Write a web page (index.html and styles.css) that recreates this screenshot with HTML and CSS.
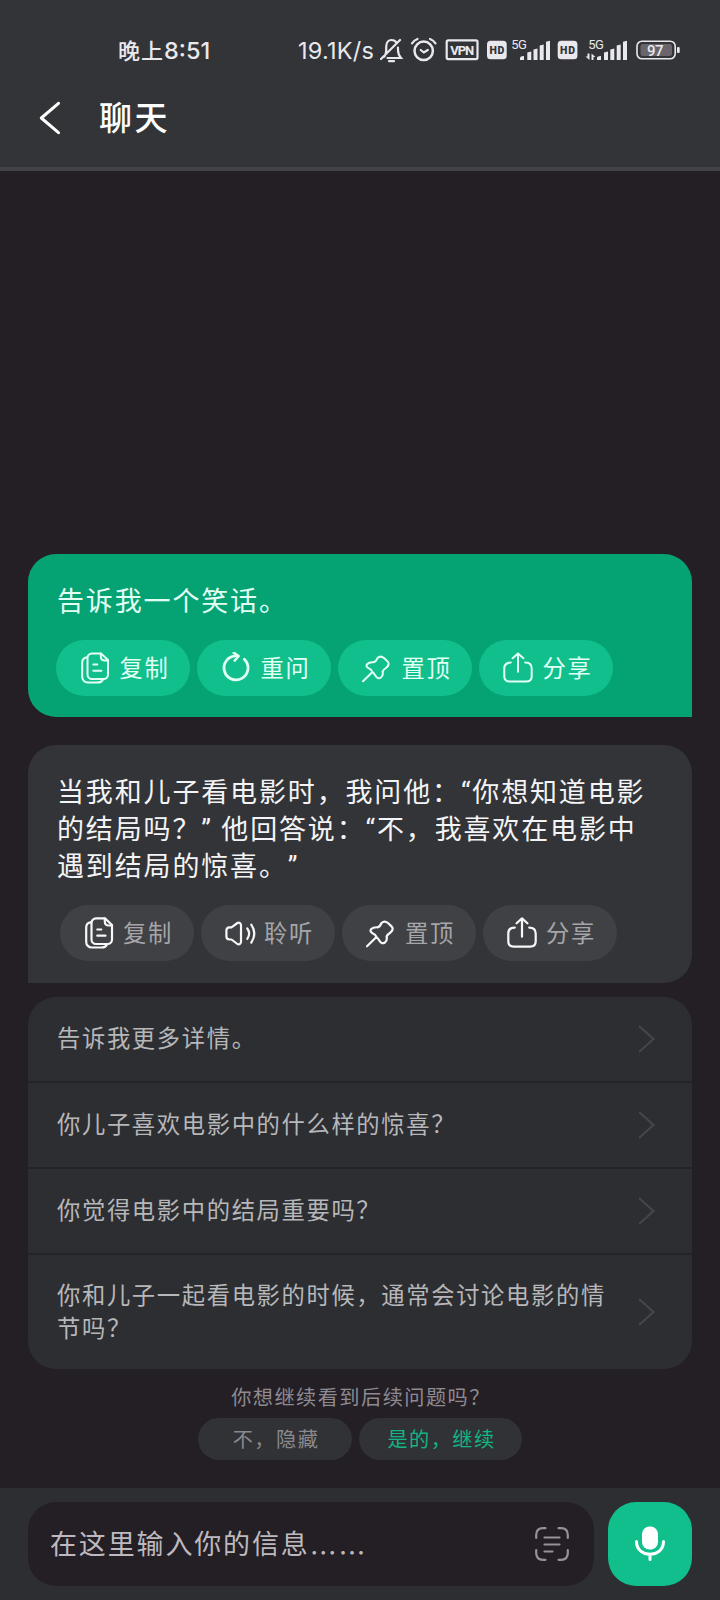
FILE: index.html
```html
<!DOCTYPE html>
<html lang="zh-CN">
<head>
<meta charset="utf-8">
<title>聊天</title>
<link rel="stylesheet" href="styles.css">
</head>
<body>
<svg class="defs" width="0" height="0">
  <symbol id="copy" viewBox="0 0 32 32">
    <path d="M12 1.4h9l7 6.6v14.500a4.500 4.500 0 0 1-4.500 4.500H12a4.500 4.500 0 0 1-4.500-4.500V5.900A4.500 4.500 0 0 1 12 1.400z"/>
    <path d="M20.800 1.600v2.900q0 4 4 4h3M7.300 5.200Q2.200 5.700 2.200 10.600V25a5.500 5.500 0 0 0 5.500 5.500h10q4 0 5.300-3M13.300 12.500h4M13.300 18.700h8.200"/>
  </symbol>
  <symbol id="redo" viewBox="0 0 32 32">
    <path stroke-width="2.800" d="M23.300 7.200A12 12 0 1 1 14.800 3.900"/>
    <path stroke-width="2.600" d="M12.800 0.800L17.600 4L13.800 8.500"/>
  </symbol>
  <symbol id="pin" viewBox="0 0 32 32">
    <path d="M1 29.300L10.500 20M5 12.300Q3.600 14.600 6.500 16.200Q9.500 17.500 10.500 20Q12 21.500 13.500 23.800Q15.500 27.500 19 25.500Q21.500 23.500 20.600 19.500Q21.500 17.500 24.500 15.500Q28.200 12 25.500 9.400L22 6Q18.500 3.300 15.500 6Q14 9.800 11.500 10.300Q7.200 10 5 12.300z"/>
  </symbol>
  <symbol id="share" viewBox="0 0 32 32">
    <path d="M7.800 10.600Q1.300 10.600 1.300 16.500V24.500Q1.300 29.600 7 29.600H23Q28.700 29.600 28.700 24.500V16.500Q28.700 10.600 22.200 10.600M15 19.700V1.800M9.600 6.300L15 1.400L20.400 6.300"/>
  </symbol>
  <symbol id="sound" viewBox="0 0 32 32">
    <path d="M1.400 13.500Q1.400 10.500 4.500 10.300H6.500L12.400 6Q15.200 4.700 16 8V25Q15.200 28.300 12.400 27L6.500 22.500H4.500Q1.400 22.300 1.400 19.500zM22.300 11.500Q26 16.500 22.300 21.800M26.300 7.600Q32.300 16.500 26.300 25.700"/>
  </symbol>
  <symbol id="next" viewBox="0 0 16 28">
    <path d="M0 1L14.500 14L0 27"/>
  </symbol>
</svg>

<div class="screen">
  <header class="header">
    <div class="status">
      <div class="clock"><span class="clock-cn">晚上</span>8:51</div>
      <div class="speed">19.1K/s</div>
      <svg class="indicators" viewBox="380 36 304 28" width="304" height="28">
        <g fill="none" stroke="#e9e8ec" stroke-width="2.200" stroke-linecap="round">
          <path d="M384.500 56.500Q386.200 54 386.200 50V46.500Q386.600 40 391.500 40Q394.500 40 396 42M398 47.500V50Q398 54.500 401 58H387.500M381 59L400 40M389 61.200H394"/>
          <circle cx="423.700" cy="50.800" r="9.200" stroke-width="2.500"/>
          <path d="M420.700 50L423.900 52.500L427.800 50M412 43.300Q414 40.300 417.500 39M435.500 43.300Q433.500 40.300 430 39"/>
          <rect x="446.700" y="40.300" width="30.800" height="18.800" rx="1.500"/>
        </g>
        <g fill="#e9e8ec">
          <rect x="487" y="40.700" width="19.700" height="18.600" rx="3.500"/>
          <rect x="557.700" y="40.700" width="19.700" height="18.600" rx="3.500"/>
          <path d="M520 60v-2q0-2 4-2v4zM527.300 60v-7.500l4-1v8.500zM533.500 60V49.500l4-1V60zM539.700 60V45.500l4-1V60zM546 60V41.700l4-1V60z"/>
          <path d="M597 60v-2q0-2 4-2v4zM604 60v-7.500l4-1v8.500zM610.300 60V49.500l4-1V60zM616.700 60V45.500l4-1V60zM623 60V41.700l4-1V60z"/>
          <path d="M587.500 53.500h2V60l-4-3.500h2zM591.500 60v-6.500l4 3.500h-2v3z"/>
          <rect x="677" y="47" width="2.700" height="6" rx="1"/>
        </g>
        <rect x="637" y="41.200" width="38.200" height="17.600" rx="5" fill="none" stroke="#e9e8ec" stroke-width="1.600"/>
        <rect x="640.500" y="44" width="31.500" height="12" rx="2.500" fill="#69656b"/>
        <text class="t-vpn" x="462.200" y="54.700" textLength="24">VPN</text>
        <text class="t-hd" x="496.900" y="54" textLength="15">HD</text>
        <text class="t-hd" x="567.600" y="54" textLength="15">HD</text>
        <text class="t-5g" x="519" y="48.700" textLength="15.500">5G</text>
        <text class="t-5g" x="596" y="48.700" textLength="15.500">5G</text>
        <text class="t-bat" x="655.300" y="55.500" textLength="16.500">97</text>
      </svg>
    </div>
    <div class="titlebar">
      <svg class="back" viewBox="0 0 22 34" width="22" height="34"><path d="M19.500 2.300L2.300 17L19.500 31.700"/></svg>
      <h1 class="title">聊天</h1>
    </div>
  </header>

  <main class="chat">
    <section class="bubble user">
      <p class="message"><span class="line">告诉我一个笑话。</span></p>
      <div class="actions">
        <button class="action"><svg class="icon"><use href="#copy"/></svg><span class="label">复制</span></button>
        <button class="action"><svg class="icon"><use href="#redo"/></svg><span class="label">重问</span></button>
        <button class="action"><svg class="icon"><use href="#pin"/></svg><span class="label">置顶</span></button>
        <button class="action"><svg class="icon"><use href="#share"/></svg><span class="label">分享</span></button>
      </div>
    </section>

    <section class="bubble reply">
      <p class="message"><span class="line">当我和儿子看电影时，我问他：“你想知道电影</span><span class="line">的结局吗？” 他回答说：“不，我喜欢在电影中</span><span class="line">遇到结局的惊喜。”</span></p>
      <div class="actions">
        <button class="action"><svg class="icon"><use href="#copy"/></svg><span class="label">复制</span></button>
        <button class="action"><svg class="icon"><use href="#sound"/></svg><span class="label">聆听</span></button>
        <button class="action"><svg class="icon"><use href="#pin"/></svg><span class="label">置顶</span></button>
        <button class="action"><svg class="icon"><use href="#share"/></svg><span class="label">分享</span></button>
      </div>
    </section>

    <ul class="suggestions">
      <li class="suggestion"><span>告诉我更多详情。</span><svg class="next"><use href="#next"/></svg></li>
      <li class="suggestion"><span>你儿子喜欢电影中的什么样的惊喜？</span><svg class="next"><use href="#next"/></svg></li>
      <li class="suggestion"><span>你觉得电影中的结局重要吗？</span><svg class="next"><use href="#next"/></svg></li>
      <li class="suggestion tall"><span>你和儿子一起看电影的时候，通常会讨论电影的情<br>节吗？</span><svg class="next"><use href="#next"/></svg></li>
    </ul>

    <div class="followup">
      <p class="ask">你想继续看到后续问题吗？</p>
      <div class="choices">
        <button class="choice no">不，隐藏</button>
        <button class="choice yes">是的，继续</button>
      </div>
    </div>
  </main>

  <footer class="composer">
    <div class="field">
      <span class="placeholder">在这里输入你的信息<span class="dots">……</span></span>
      <svg class="scan" viewBox="0 0 34 34" width="34" height="34"><path d="M1.200 11V8Q1.200 1.200 8 1.200H10.500M23.500 1.200H26Q32.800 1.200 32.800 8V11M32.800 23V26Q32.800 32.800 26 32.800H23.500M10.500 32.800H8Q1.200 32.800 1.200 26V23M9.500 10.500H24.500M9.500 17.500H24.500M9.500 24.500H17.500"/></svg>
    </div>
    <button class="mic"><svg viewBox="0 0 30 36" width="30" height="36"><rect x="7" y="0.500" width="16" height="23" rx="7.500" fill="#fff"/><path d="M1.500 15.500C1.500 32.500 28.500 32.500 28.500 15.500M15 28V33.500" fill="none" stroke="#fff" stroke-width="3" stroke-linecap="round"/></svg></button>
  </footer>
</div>
</body>
</html>
```

FILE: styles.css
```css
* { box-sizing: border-box; }

body {
  margin: 0;
  background: #241f25;
  color: #f4f4f6;
  font-family: Roboto, "Noto Sans CJK SC", sans-serif;
  text-spacing-trim: space-all;
}

h1, p, ul { margin: 0; padding: 0; font-weight: 400; }
ul { list-style: none; }
button { border: 0; padding: 0; font: inherit; color: inherit; background: none; }
svg { display: block; flex: none; }
.defs { position: absolute; }

.screen {
  display: flex;
  flex-direction: column;
  width: 720px;
  height: 1600px;
  overflow: hidden;
}

.header {
  height: 171px;
  background: #333438;
  border-bottom: 4px solid #434347;
}

.status {
  display: flex;
  align-items: center;
  height: 64px;
  padding: 36px 0 0 118px;
  color: #e9e8ec;
  font-family: Inter, "Noto Sans CJK SC", sans-serif;
  font-size: 23.500px;
  line-height: 28px;
  letter-spacing: 0;
  white-space: nowrap;
}
.clock { width: 180px; padding-top: 1px; font-weight: 500; }
.clock-cn { font-size: 22px; letter-spacing: 1px; }
.speed { width: 82px; padding-top: 1px; letter-spacing: 0.250px; }
.indicators text { fill: #e9e8ec; text-anchor: middle; letter-spacing: 0; font-family: Roboto, sans-serif; }
.indicators .t-vpn { font-size: 13px; font-weight: 700; }
.indicators .t-hd { font-size: 10.500px; font-weight: 900; fill: #333438; }
.indicators .t-5g { font-size: 13px; }
.indicators .t-bat { font-size: 15px; font-weight: 500; }

.titlebar {
  display: flex;
  align-items: center;
  gap: 38px;
  height: 50px;
  margin-top: 29px;
  padding: 0 39px;
}
.back { fill: none; stroke: #fff; stroke-width: 3; stroke-linecap: round; stroke-linejoin: round; }
.title { padding-top: 2px; color: #fff; font-size: 33px; font-weight: 500; line-height: 50px; letter-spacing: 2.600px; }

.chat {
  flex: 1;
  display: flex;
  flex-direction: column;
  justify-content: flex-end;
  padding: 0 28px 28px;
}

.bubble { border-radius: 28px; }
.user {
  height: 163px;
  padding: 28px;
  border-bottom-right-radius: 0;
  background: #05a274;
  color: #e2fff4;
}
.reply {
  height: 238px;
  margin-top: 28px;
  padding: 28px 28px 0 32px;
  border-bottom-left-radius: 0;
  background: #333438;
}
.message { padding: 2px 0 0 1px; font-size: 27px; line-height: 37px; letter-spacing: 1.850px; white-space: nowrap; }
.reply .message { margin-left: -4px; }
.line { display: block; }

.actions { display: flex; gap: 7px; margin-top: 19px; }
.action {
  display: flex;
  align-items: center;
  gap: 7.500px;
  width: 134px;
  height: 56px;
  padding-left: 24px;
  border-radius: 28px;
  background: #10bf8c;
  font-size: 23.300px;
  letter-spacing: 1.600px;
}
.label { padding-bottom: 2px; }
.reply .action { background: #404144; color: #a6a6aa; }
.reply .actions { margin-left: -0.500px; }
.icon {
  width: 32px;
  height: 32px;
  fill: none;
  stroke: #e2fff4;
  stroke-width: 2;
  stroke-linecap: round;
  stroke-linejoin: round;
}
.reply .icon { stroke: #f7f7f9; stroke-width: 2.200; }

.suggestions {
  margin-top: 14px;
  border-radius: 28px;
  background: #2d2e32;
  color: #b7b7ba;
  font-size: 23.300px;
  line-height: 33px;
  letter-spacing: 1.650px;
}
.suggestion {
  display: flex;
  align-items: center;
  justify-content: space-between;
  height: 86px;
  padding: 0 37px 0 29px;
  border-bottom: 2px solid #242328;
  white-space: nowrap;
}
.suggestion.tall { height: 114px; border-bottom: 0; }
.suggestion span { padding-top: 1px; }
.next { width: 16px; height: 28px; fill: none; stroke: #46474b; stroke-width: 2; }

.followup { height: 91px; padding-top: 14px; }
.ask {
  padding-left: 2px;
  color: #8e8a91;
  font-size: 20.200px;
  line-height: 30px;
  letter-spacing: 1.450px;
  text-align: center;
}
.choices { display: flex; justify-content: center; gap: 7px; margin-top: 5px; }
.choice {
  height: 42px;
  padding: 0 0 1px 2px;
  border-radius: 21px;
  background: #313236;
  font-size: 20.200px;
  letter-spacing: 1.450px;
}
.no { width: 154px; color: #8a898e; }
.yes { width: 163px; color: #12b583; }

.composer {
  display: flex;
  gap: 14px;
  height: 112px;
  padding: 14px 28px;
  background: #2d2e32;
}
.field {
  flex: 1;
  display: flex;
  align-items: center;
  justify-content: space-between;
  height: 84px;
  padding: 0 25px 0 22px;
  border-radius: 28px;
  background: #241f25;
}
.placeholder { height: 40px; color: #bdb9bf; font-size: 27px; line-height: 42px; letter-spacing: 1.850px; }
.dots { font-family: "Noto Sans CJK SC", sans-serif; line-height: 1px; vertical-align: -9px; }
.scan { fill: none; stroke: #96929a; stroke-width: 2.200; stroke-linecap: round; }
.mic {
  display: flex;
  align-items: center;
  justify-content: center;
  width: 84px;
  height: 84px;
  border-radius: 28px;
  background: #10bf8c;
}
```
